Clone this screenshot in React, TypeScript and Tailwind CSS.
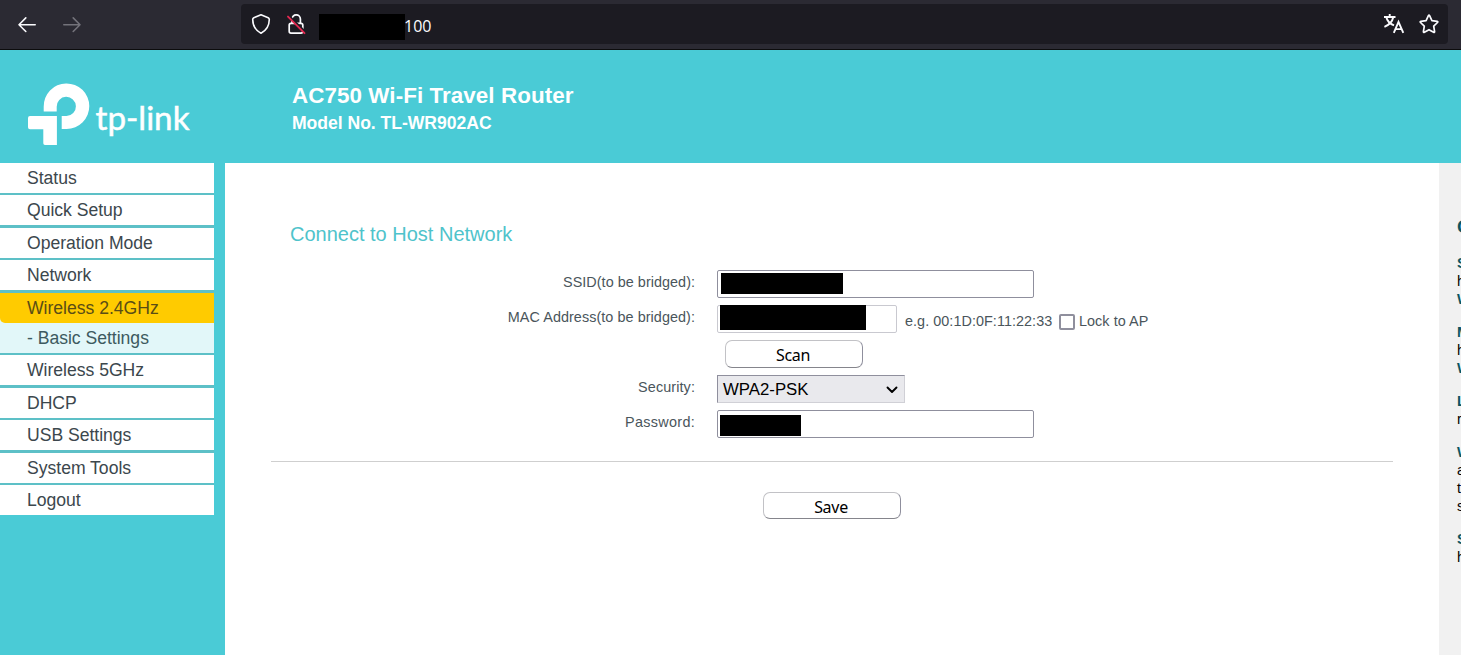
import React from "react";

type MenuItem = { label: string; height: string; kind?: "active" | "sub" };

const menu: MenuItem[] = [
  { label: "Status", height: "h-8 border-b-2" },
  { label: "Quick Setup", height: "h-[33px] border-b-3" },
  { label: "Operation Mode", height: "h-8 border-b-2" },
  { label: "Network", height: "h-[33px] border-b-3" },
  { label: "Wireless 2.4GHz", height: "h-[30px]", kind: "active" },
  { label: "- Basic Settings", height: "h-8 border-b-2", kind: "sub" },
  { label: "Wireless 5GHz", height: "h-[33px] border-b-3" },
  { label: "DHCP", height: "h-8 border-b-2" },
  { label: "USB Settings", height: "h-[33px] border-b-3" },
  { label: "System Tools", height: "h-8 border-b-2" },
  { label: "Logout", height: "h-[30px]" },
];

const itemColors = {
  active: "bg-[#ffcb00] text-[#5a4d16] rounded-bl-[5px]",
  sub: "bg-[#e2f7f9] text-[#3d5a60]",
  normal: "bg-white text-[#3c474d]",
};

const help: { title: string; lines: string[] }[] = [
  { title: "S", lines: ["h", "W"] },
  { title: "M", lines: ["h", "W"] },
  { title: "L", lines: ["r"] },
  { title: "W", lines: ["a", "t", "s"] },
  { title: "S", lines: ["h"] },
];

function BrowserBar() {
  return (
    <div className="flex h-[50px] shrink-0 items-start border-b border-[#0c0c0d] bg-[#2b2a33] pt-1">
      <div className="flex w-[241px] shrink-0 gap-[25px] pl-[17px] pt-[11px]">
        <svg width="20" height="20" viewBox="0 0 20 20" fill="none" stroke="#fbfbfe" strokeWidth="1.6" strokeLinecap="round" strokeLinejoin="round">
          <path d="M18.2 9.700H2M8.800 2.900L2 9.700l6.800 6.800" />
        </svg>
        <svg width="20" height="20" viewBox="0 0 20 20" fill="none" stroke="#73727a" strokeWidth="1.6" strokeLinecap="round" strokeLinejoin="round">
          <path d="M1.800 9.700H18M11.200 2.900L18 9.700l-6.800 6.800" />
        </svg>
      </div>
      <div className="flex h-10 w-[1207px] items-start rounded-[4px] bg-[#1c1b22] pl-2.5">
        <svg className="mt-[9px]" width="20" height="22" viewBox="0 0 20 22" fill="none" stroke="#fbfbfe" strokeWidth="1.6" strokeLinejoin="round">
          <path d="M10 1.700L17.200 4.700Q18.300 5.200 18.300 6.500C18.200 12.500 15.600 17.300 10 20.200C4.400 17.300 1.800 12.500 1.700 6.500Q1.700 5.200 2.800 4.700Z" />
        </svg>
        <svg className="ml-[15px] mt-[9px]" width="20" height="22" viewBox="0 0 20 22" fill="none">
          <g stroke="#fbfbfe" strokeWidth="1.700">
            <path d="M6 10.300V6a4.200 4.200 0 0 1 8.400 0V10.300" />
            <rect x="3.200" y="10.300" width="13.600" height="9.800" rx="1.800" />
          </g>
          <path d="M2.700 2.800L19 19" stroke="#1c1b22" strokeWidth="2.600" />
          <path d="M2 3.600L18.500 20.200" stroke="#e22850" strokeWidth="1.900" strokeLinecap="round" />
        </svg>
        <div className="ml-[13px] mt-[10px] h-[26px] w-[86px] bg-black" />
        <span className="-ml-px mt-[10px] font-['Open_Sans',sans-serif] text-[16px] leading-6 text-[#fbfbfe]">100</span>
        <div className="ml-auto flex gap-[13px] pr-2 pt-[9px]">
          <svg width="22" height="22" viewBox="0 0 22 22" fill="none" stroke="#fbfbfe" strokeWidth="1.900">
            <path d="M1 4H12.500M6.700 1V4M3.300 4C4.200 8.500 7.500 11 11 12.400M10.300 4C9.400 8.500 6 12 1.400 13.800M10.800 19.800L15.500 8.800L20.300 19.800M12.300 16.100H18.800" />
          </svg>
          <svg width="22" height="22" viewBox="0 0 22 22" fill="none" stroke="#fbfbfe" strokeWidth="1.700" strokeLinejoin="round">
            <path d="M10.400 2.700Q11 1.700 11.600 2.700L13.900 7.600L19.200 8.300Q20.300 8.600 19.500 9.500L15.700 13.200L16.600 18.600Q16.600 19.800 15.600 19.300L11 16.700L6.400 19.300Q5.400 19.800 5.400 18.600L6.300 13.200L2.500 9.500Q1.700 8.600 2.800 8.300L8.100 7.600Z" />
          </svg>
        </div>
      </div>
    </div>
  );
}

function Logo() {
  return (
    <svg className="shrink-0" width="225" height="113" viewBox="0 0 225 113">
      <g fill="white">
        <path d="M43.700 61.500V56.800A22.800 22.800 0 1 1 66.500 79H61.700V66H66.500A9.600 9.600 0 1 0 56.700 56.800V61.500Z" />
        <path d="M30 66H56.900V95H45Q43.300 95 43.300 93.300V79.300H30Q28 79.300 28 77.300V68Q28 66 30 66Z" />
        <text x="95.500" y="79.500" fontFamily="Lato, sans-serif" fontSize="33.500" stroke="white" strokeWidth="0.500" textLength="94" lengthAdjust="spacingAndGlyphs">tp-link</text>
      </g>
    </svg>
  );
}

function Row({ label, children, spacing = "tracking-normal" }: { label: string; children: React.ReactNode; spacing?: string }) {
  return (
    <div className="flex h-[35px] items-start">
      <div className={`w-[470px] shrink-0 pt-1 text-right leading-4 text-[#4a555b] ${spacing}`}>{label}</div>
      <div className="ml-[22px] flex">{children}</div>
    </div>
  );
}

const button =
  "w-[138px] rounded-[7px] border border-[#c2c2c6] border-r-[#8f8f9d] border-b-[#85858c] bg-white pr-[2px] pt-px font-['Noto_Sans',sans-serif] text-[16px] tracking-[-0.3px] text-black";

export default function App() {
  return (
    <div className="flex h-[655px] w-[1461px] flex-col overflow-hidden bg-[#4acbd6] font-['Liberation_Sans',Arial,sans-serif]">
      <BrowserBar />
      <header className="flex h-[113px] shrink-0">
        <Logo />
        <div className="pl-[67px] pt-[33px] font-bold text-white">
          <h1 className="text-[22.4px] leading-[26px] tracking-[0.07px]">AC750 Wi-Fi Travel Router</h1>
          <h2 className="mt-[3px] text-[17.6px] leading-[22px] tracking-[-0.04px]">Model No. TL-WR902AC</h2>
        </div>
      </header>
      <div className="flex min-h-0 flex-1">
        <nav className="mr-[11px] w-[214px] shrink-0 text-[17.6px] leading-[30px] tracking-[-0.02px]">
          {menu.map((m) => (
            <div key={m.label} className={`border-[#5dc0c7] ${m.kind === "active" ? "bg-[#e2f7f9]" : ""} ${m.height}`}>
              <div className={`h-[30px] pl-[27px] ${itemColors[m.kind ?? "normal"]}`}>{m.label}</div>
            </div>
          ))}
        </nav>
        <main className="w-[1214px] shrink-0 bg-white text-[14.4px]">
          <h3 className="pl-[65px] pt-[59px] text-[20px] leading-6 text-[#4fc3cb]">Connect to Host Network</h3>
          <div className="pt-6">
            <Row label="SSID(to be bridged):" spacing="tracking-[0.04px]">
              <div className="h-7 w-[317px] rounded-[2px] border border-[#8f8f9d] pl-[3px] pt-[2px]">
                <div className="h-[21px] w-[122px] bg-black" />
              </div>
            </Row>
            <Row label="MAC Address(to be bridged):" spacing="tracking-[0.06px]">
              <div className="h-7 w-[180px] rounded-[2px] border border-[#c9c9d0] pl-[2px]">
                <div className="-mt-px h-[25px] w-[146px] bg-black" />
              </div>
              <div className="flex whitespace-nowrap pt-2 leading-4 tracking-[0.05px] text-[#4a555b]">
                <span className="w-[155px] pl-2">e.g. 00:1D:0F:11:22:33</span>
                <span className="ml-[7px] mt-[1px] size-4 rounded-[2px] border-2 border-[#8f8f9d]" />
                <span className="ml-1">Lock to AP</span>
              </div>
            </Row>
            <Row label="">
              <button className={`ml-2 h-7 leading-[26px] ${button}`}>Scan</button>
            </Row>
            <Row label="Security:" spacing="tracking-[0.1px]">
              <div className="flex h-7 w-[188px] items-center justify-between border border-[#d0d0d6] border-l-[#8f8f9d] border-t-[#8f8f9d] bg-[#e9e9ed] pl-[5px] pr-[6px] text-[16.8px] text-black">
                <span className="pt-[2px]">WPA2-PSK</span>
                <svg className="mt-px" width="12" height="8" viewBox="0 0 12 8" fill="none" stroke="black" strokeWidth="1.900" strokeLinecap="round" strokeLinejoin="round">
                  <path d="M1.500 1.500L6 6L10.500 1.500" />
                </svg>
              </div>
            </Row>
            <Row label="Password:" spacing="tracking-[0.3px]">
              <div className="h-7 w-[317px] rounded-[2px] border border-[#8f8f9d] pl-[2px] pt-[4px]">
                <div className="h-[21px] w-[81px] bg-black" />
              </div>
            </Row>
          </div>
          <div className="ml-[46px] mt-[15.500px] h-[1.500px] w-[1122px] bg-[#cfcfcf]" />
          <button className={`ml-[538px] mt-[30px] h-[27px] leading-[26px] ${button}`}>Save</button>
        </main>
        <aside className="w-[22px] shrink-0 overflow-hidden bg-[#f1f1f1] pl-[18px] text-[14.4px] leading-[18px] text-black">
          <div className="pt-[54px] text-[19px] font-bold leading-5 text-[#0b5560]">C</div>
          {help.map((h, i) => (
            <div key={i} className={i === 0 ? "mt-[17px]" : "mt-[15px]"}>
              <div className="font-bold text-[#0b5560]">{h.title}</div>
              {h.lines.map((l) => (
                <div key={l} className={l === "W" ? "font-bold text-[#0b5560]" : ""}>{l}</div>
              ))}
            </div>
          ))}
        </aside>
      </div>
    </div>
  );
}
